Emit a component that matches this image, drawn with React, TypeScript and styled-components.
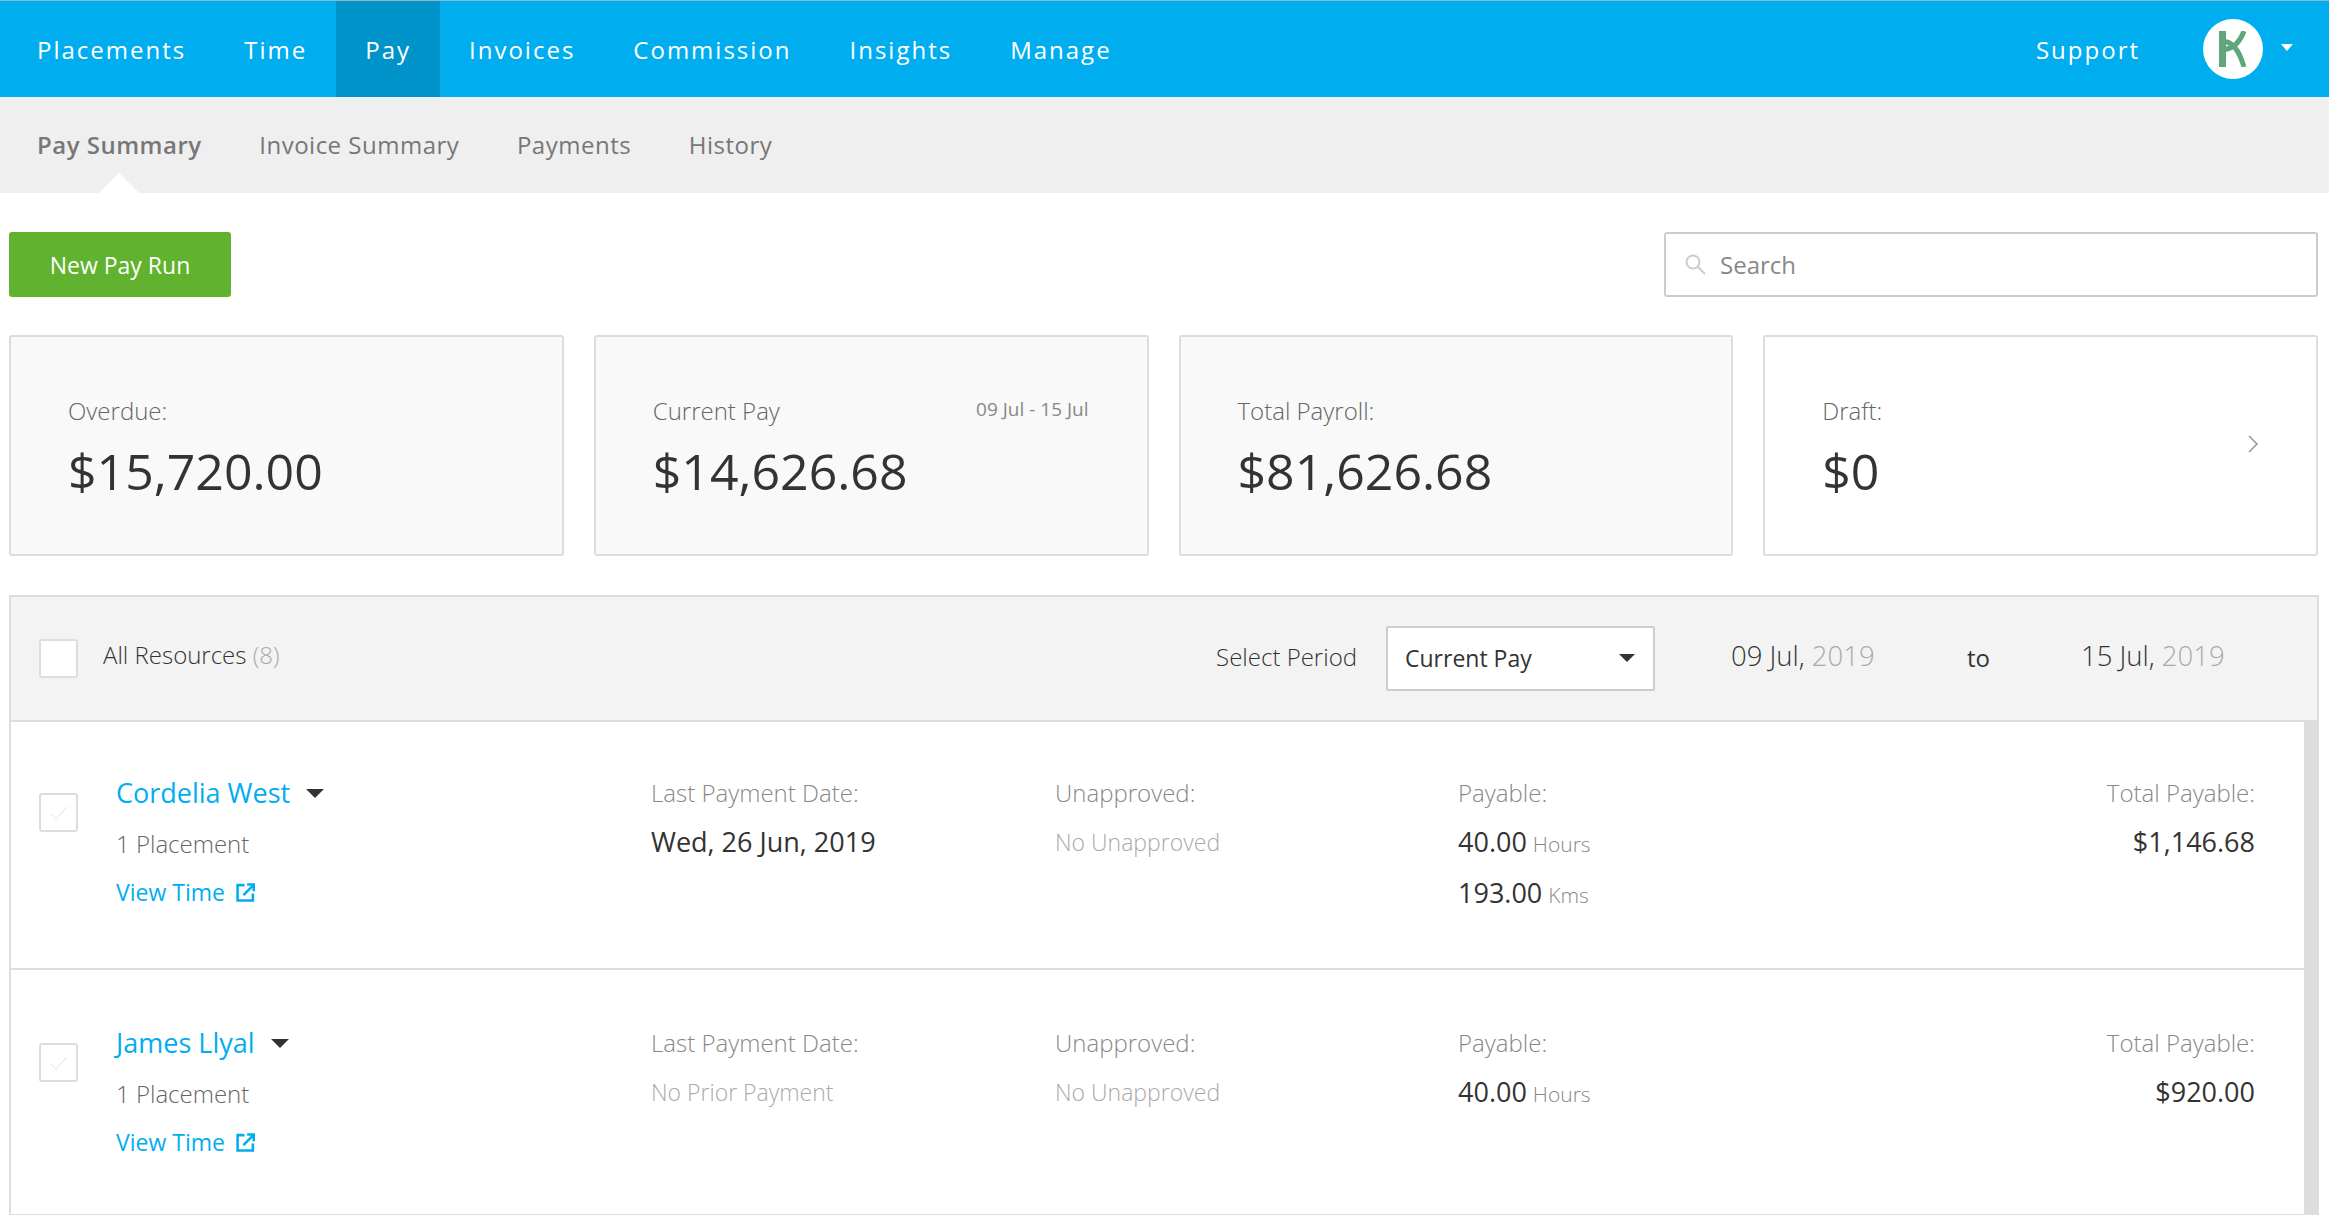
import React from "react";
import styled, { createGlobalStyle } from "styled-components";

const GlobalStyle = createGlobalStyle`
  html, body {
    margin: 0;
    padding: 0;
    background: #fff;
    font-family: "Open Sans", "Noto Sans", sans-serif;
    color: #333;
  }
  * {
    box-sizing: border-box;
  }
`;

const Page = styled.div`
  width: 2329px;
  height: 1215px;
  overflow: hidden;
`;

const TopBar = styled.header`
  height: 97px;
  display: flex;
  align-items: stretch;
  padding: 0 36px 0 8px;
  background: #00aeef;
  border-top: 1px solid #8fb4c4;
`;

const TopItem = styled.a<{ $active?: boolean }>`
  display: flex;
  align-items: center;
  padding: 0 29px;
  color: #fff;
  font-size: 24px;
  letter-spacing: 2px;
  background: ${({ $active }) => ($active ? "#0093c9" : "transparent")};
`;

const Spacer = styled.div`
  flex: 1;
`;

const Avatar = styled.div`
  width: 60px;
  height: 60px;
  margin: 18px 0 0 34px;
  border-radius: 50%;
  background: #fff;
  display: flex;
  align-items: center;
  justify-content: center;
`;

const UserCaret = styled.div`
  width: 0;
  height: 0;
  margin: 43px 0 0 18px;
  border-left: 6.5px solid transparent;
  border-right: 6.5px solid transparent;
  border-top: 7px solid #fff;
`;

const SubBar = styled.nav`
  height: 96px;
  display: flex;
  align-items: center;
  gap: 57.6px;
  padding: 0 37px 1px;
  background: #efefef;
`;

const SubItem = styled.a<{ $active?: boolean }>`
  position: relative;
  font-size: 24px;
  letter-spacing: 0.5px;
  font-weight: ${({ $active }) => ($active ? 600 : 400)};
  color: #777;

  ${({ $active }) =>
    $active &&
    `
    &::after {
      content: "";
      position: absolute;
      left: 50%;
      bottom: -32px;
      margin-left: -20px;
      border-left: 20px solid transparent;
      border-right: 20px solid transparent;
      border-bottom: 20px solid #fff;
    }
  `}
`;

const Content = styled.main`
  padding: 39px 10px 0 9px;
`;

const ActionRow = styled.div`
  display: flex;
  justify-content: space-between;
  align-items: center;
`;

const PrimaryButton = styled.button`
  width: 222px;
  height: 65px;
  border: 0;
  border-radius: 3px;
  background: #60b22f;
  color: #fff;
  font-family: inherit;
  font-size: 23px;
`;

const SearchBox = styled.div`
  width: 654px;
  height: 65px;
  margin-right: 1px;
  display: flex;
  align-items: center;
  gap: 14px;
  padding-left: 19px;
  border: 2px solid #ccc;
  border-radius: 3px;
  font-size: 24px;
  color: #888;
`;

const Cards = styled.section`
  display: grid;
  grid-template-columns: repeat(4, 1fr);
  gap: 30px;
  margin: 38px 1px 0 0;
`;

const Card = styled.div<{ $plain?: boolean }>`
  position: relative;
  height: 221px;
  padding: 57px 57px 0;
  border: 2px solid #ddd;
  border-radius: 3px;
  background: ${({ $plain }) => ($plain ? "#fff" : "#f9f9f9")};
`;

const CardLabel = styled.div`
  font-size: 24px;
  line-height: 33px;
  font-weight: 300;
  color: #666;
`;

const CardValue = styled.div`
  margin-top: 10px;
  font-size: 50px;
  line-height: 68px;
  color: #333;
`;

const CardRange = styled.div`
  position: absolute;
  top: 59px;
  right: 58px;
  font-size: 19px;
  color: #888;
`;

const CardChevron = styled.svg`
  position: absolute;
  top: 97px;
  right: 56px;
`;

const Panel = styled.section`
  margin-top: 39px;
  border: 2px solid #ddd;
  border-bottom: 0;
`;

const FilterBar = styled.div`
  height: 125px;
  display: flex;
  align-items: center;
  padding: 0 92px 0 28px;
  background: #f3f3f3;
  border-bottom: 2px solid #ddd;
  font-size: 24px;
`;

const CheckBox = styled.span`
  flex: none;
  width: 39px;
  height: 39px;
  display: flex;
  align-items: center;
  justify-content: center;
  border: 2px solid #ddd;
  border-radius: 3px;
  background: #fff;
`;

const AllLabel = styled.span`
  margin-left: 25px;
  font-weight: 300;
  color: #333;
  flex: 1;
  position: relative;
  top: -4px;
`;

const Muted = styled.span`
  color: #aaa;
`;

const PeriodLabel = styled.span`
  font-weight: 300;
  margin-right: 29px;
  position: relative;
  top: -2px;
`;

const PeriodSelect = styled.div`
  width: 269px;
  height: 65px;
  display: flex;
  align-items: center;
  justify-content: space-between;
  padding: 0 18px 2px 17px;
  margin-right: 76px;
  border: 2px solid #ccc;
  border-radius: 2px;
  background: #fff;
  font-size: 23px;
`;

const Caret = styled.span<{ $size?: number }>`
  display: inline-block;
  width: 0;
  height: 0;
  border-left: ${({ $size }) => $size ?? 8}px solid transparent;
  border-right: ${({ $size }) => $size ?? 8}px solid transparent;
  border-top: ${({ $size }) => $size ?? 8}px solid #333;
`;

const DateText = styled.span`
  width: 144px;
  font-size: 27.5px;
  font-weight: 300;
  white-space: nowrap;
  position: relative;
  top: -3px;
`;

const ToText = styled.span`
  width: 206px;
  padding-left: 92px;
  position: relative;
  top: -1px;
`;

const Row = styled.article`
  height: 248px;
  display: grid;
  grid-template-columns: 612px 404px 403px 1fr auto;
  padding: 51px 49px 0 28px;
  border-bottom: 2px solid #ddd;
  margin-right: 13px;
  position: relative;

  & + & {
    height: 246px;
    padding-top: 53px;
  }
`;

const ScrollTrack = styled.div`
  position: absolute;
  top: 0;
  right: -13px;
  bottom: -2px;
  width: 13px;
  background: #ddd;
`;

const NameCell = styled.div`
  display: grid;
  grid-template-columns: 39px 1fr;
  column-gap: 38px;
`;

const RowCheck = styled(CheckBox)`
  margin-top: 20px;
`;

const NameLine = styled.div`
  display: flex;
  align-items: center;
  gap: 16px;
  font-size: 27px;
  line-height: 40px;
  color: #00aeef;
`;

const Placement = styled.div`
  margin-top: 12px;
  font-size: 24px;
  line-height: 38px;
  font-weight: 300;
  color: #666;
`;

const TimeLink = styled.a`
  margin-top: 10px;
  display: flex;
  align-items: center;
  gap: 11px;
  font-size: 23px;
  line-height: 38px;
  color: #00aeef;
`;

const Column = styled.div<{ $right?: boolean }>`
  text-align: ${({ $right }) => ($right ? "right" : "left")};
`;

const ColLabel = styled.div`
  font-size: 24px;
  line-height: 40px;
  color: #888;
  font-weight: 300;
`;

const ColValue = styled.div`
  margin-top: 9px;
  font-size: 27px;
  line-height: 40px;
  color: #333;
`;

const ColEmpty = styled(ColValue)`
  font-size: 23px;
  font-weight: 300;
  color: #aaa;
`;

const Unit = styled.span`
  margin-left: 6px;
  font-size: 21px;
  font-weight: 300;
  color: #888;
`;

const ExternalIcon = () => (
  <svg width="19" height="19" viewBox="0 0 18 18" fill="none" stroke="#00aeef" strokeWidth="2.4">
    <path d="M8 2H1.5v14.5H16V10" />
    <path d="M7 11.5L16 2.5M10.5 1.5h6.3v6.3" />
  </svg>
);

const LogoMark = () => (
  <svg width="29" height="36" viewBox="0 0 29 36" fill="none" stroke="#5fa67d" strokeWidth="5">
    <path d="M3.5 0v36" strokeWidth="7" />
    <path d="M25 0C22 8 17 17 6 18.5" />
    <path d="M25 36C22 26 17 12 6 10.5" />
  </svg>
);

const SearchIcon = () => (
  <svg width="21" height="21" viewBox="0 0 21 21" fill="none" stroke="#ccc" strokeWidth="2">
    <circle cx="8" cy="8" r="6.5" />
    <path d="M12.8 12.8L20 20" />
  </svg>
);

const FaintCheck = () => (
  <svg width="18" height="14" viewBox="0 0 18 14" fill="none" stroke="#eee" strokeWidth="1.5">
    <path d="M1 8l5 5L17 1" />
  </svg>
);

type Resource = {
  name: string;
  lastPayment: string;
  hasPayment: boolean;
  payable: { amount: string; unit: string }[];
  total: string;
};

const resources: Resource[] = [
  {
    name: "Cordelia West",
    lastPayment: "Wed, 26 Jun, 2019",
    hasPayment: true,
    payable: [
      { amount: "40.00", unit: "Hours" },
      { amount: "193.00", unit: "Kms" },
    ],
    total: "$1,146.68",
  },
  {
    name: "James Llyal",
    lastPayment: "No Prior Payment",
    hasPayment: false,
    payable: [{ amount: "40.00", unit: "Hours" }],
    total: "$920.00",
  },
];

const topItems = ["Placements", "Time", "Pay", "Invoices", "Commission", "Insights", "Manage"];
const subItems = ["Pay Summary", "Invoice Summary", "Payments", "History"];

export default function App() {
  return (
    <Page>
      <GlobalStyle />
      <TopBar>
        {topItems.map((item) => (
          <TopItem key={item} $active={item === "Pay"}>
            {item}
          </TopItem>
        ))}
        <Spacer />
        <TopItem>Support</TopItem>
        <Avatar>
          <LogoMark />
        </Avatar>
        <UserCaret />
      </TopBar>
      <SubBar>
        {subItems.map((item) => (
          <SubItem key={item} $active={item === "Pay Summary"}>
            {item}
          </SubItem>
        ))}
      </SubBar>
      <Content>
        <ActionRow>
          <PrimaryButton>New Pay Run</PrimaryButton>
          <SearchBox>
            <SearchIcon />
            Search
          </SearchBox>
        </ActionRow>
        <Cards>
          <Card>
            <CardLabel>Overdue:</CardLabel>
            <CardValue>$15,720.00</CardValue>
          </Card>
          <Card>
            <CardLabel>Current Pay</CardLabel>
            <CardRange>09 Jul - 15 Jul</CardRange>
            <CardValue>$14,626.68</CardValue>
          </Card>
          <Card>
            <CardLabel>Total Payroll:</CardLabel>
            <CardValue>$81,626.68</CardValue>
          </Card>
          <Card $plain>
            <CardLabel>Draft:</CardLabel>
            <CardValue>$0</CardValue>
            <CardChevron width="14" height="20" viewBox="0 0 14 20" fill="none" stroke="#999" strokeWidth="1.6">
              <path d="M3 2l8 8-8 8" />
            </CardChevron>
          </Card>
        </Cards>
        <Panel>
          <FilterBar>
            <CheckBox />
            <AllLabel>
              All Resources <Muted>(8)</Muted>
            </AllLabel>
            <PeriodLabel>Select Period</PeriodLabel>
            <PeriodSelect>
              Current Pay
              <Caret />
            </PeriodSelect>
            <DateText>
              09 Jul, <Muted>2019</Muted>
            </DateText>
            <ToText>to</ToText>
            <DateText>
              15 Jul, <Muted>2019</Muted>
            </DateText>
          </FilterBar>
          {resources.map((r) => (
            <Row key={r.name}>
              <NameCell>
                <RowCheck>
                  <FaintCheck />
                </RowCheck>
                <div>
                  <NameLine>
                    {r.name}
                    <Caret $size={9} />
                  </NameLine>
                  <Placement>1 Placement</Placement>
                  <TimeLink>
                    View Time
                    <ExternalIcon />
                  </TimeLink>
                </div>
              </NameCell>
              <Column>
                <ColLabel>Last Payment Date:</ColLabel>
                {r.hasPayment ? <ColValue>{r.lastPayment}</ColValue> : <ColEmpty>{r.lastPayment}</ColEmpty>}
              </Column>
              <Column>
                <ColLabel>Unapproved:</ColLabel>
                <ColEmpty>No Unapproved</ColEmpty>
              </Column>
              <Column>
                <ColLabel>Payable:</ColLabel>
                {r.payable.map((p) => (
                  <ColValue key={p.unit}>
                    {p.amount}
                    <Unit>{p.unit}</Unit>
                  </ColValue>
                ))}
              </Column>
              <Column $right>
                <ColLabel>Total Payable:</ColLabel>
                <ColValue>{r.total}</ColValue>
              </Column>
              <ScrollTrack />
            </Row>
          ))}
        </Panel>
      </Content>
    </Page>
  );
}
